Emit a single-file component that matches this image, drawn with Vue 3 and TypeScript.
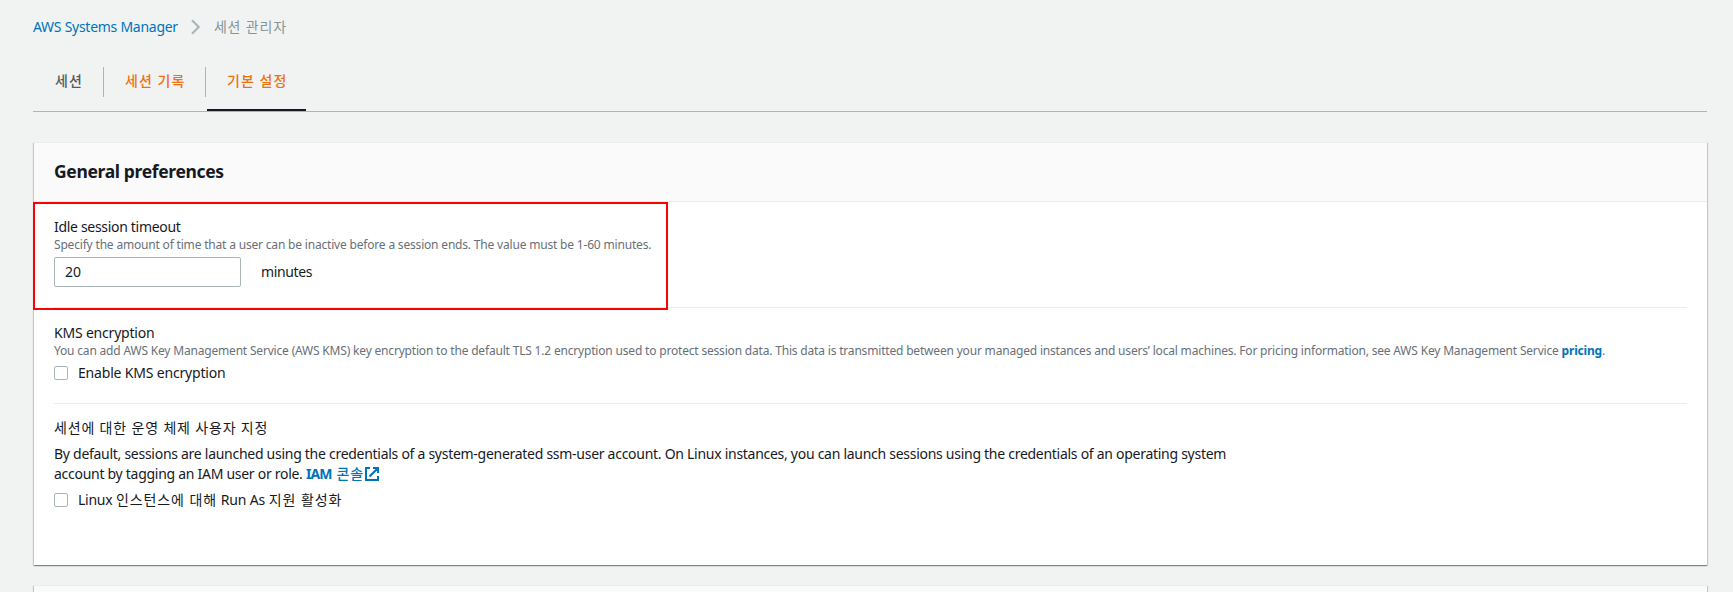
<script setup lang="ts">
import { ref } from 'vue'

interface Tab {
  label: string
  state: 'plain' | 'accent' | 'active'
}

const tabs: Tab[] = [
  { label: '세션', state: 'plain' },
  { label: '세션 기록', state: 'accent' },
  { label: '기본 설정', state: 'active' },
]

const timeout = ref('20')
const kmsEnabled = ref(false)
const runAsEnabled = ref(false)
</script>

<template>
  <div class="page">
    <nav class="breadcrumb">
      <a class="crumb-link">AWS Systems Manager</a>
      <svg class="chevron" width="10" height="16" viewBox="0 0 10 16">
        <path d="M1 1.2 7.7 8 1 14.8" fill="none" stroke="#aab7b8" stroke-width="2.2" />
      </svg>
      <span class="crumb-current ko">세션 관리자</span>
    </nav>

    <div class="tabs">
      <div v-for="tab in tabs" :key="tab.label" class="tab" :class="tab.state">
        <span class="tab-label ko">{{ tab.label }}</span>
      </div>
    </div>

    <section class="card">
      <header class="card-header">
        <h2>General preferences</h2>
      </header>
      <div class="card-body">
        <div class="group timeout">
          <div class="label idle">Idle session timeout</div>
          <div class="help">Specify the amount of time that a user can be inactive before a session ends. The value must be 1-60 minutes.</div>
          <div class="field">
            <input v-model="timeout" class="input" type="text" />
            <span class="unit">minutes</span>
          </div>
        </div>

        <div class="group kms">
          <div class="label kms-label">KMS encryption</div>
          <div class="help">You can add AWS Key Management Service (AWS KMS) key encryption to the default TLS 1.2 encryption used to protect session data. This data is transmitted between your managed instances and users’ local machines. For pricing information, see AWS Key Management Service <a class="link">pricing</a>.</div>
          <label class="check">
            <input v-model="kmsEnabled" type="checkbox" />
            <span>Enable KMS encryption</span>
          </label>
        </div>

        <div class="group runas">
          <div class="label ko">세션에 대한 운영 체제 사용자 지정</div>
          <p class="text">
            By default, sessions are launched using the credentials of a system-generated ssm-user account. On Linux instances, you can launch sessions using the credentials of an operating system<br />
            <span class="second">account by tagging an IAM user or role. </span><a class="link console"><span class="iam">IAM</span> <span class="ko">콘솔</span><svg class="external" width="14" height="14" viewBox="0 0 14 14">
              <path d="M5 1H1v12h12V9M8 1h5v5M13 1 4.5 9.5" fill="none" stroke="#0073bb" stroke-width="2" />
            </svg></a>
          </p>
          <label class="check mixed">
            <input v-model="runAsEnabled" type="checkbox" />
            <span>Linux <span class="ko">인스턴스에 대해</span> Run As <span class="ko">지원 활성화</span></span>
          </label>
        </div>
      </div>
      <div class="highlight"></div>
    </section>

    <section class="card next">
      <header class="card-header"></header>
    </section>
  </div>
</template>

<style>
body {
  background: #f1f3f3;
  overflow: hidden;
}
</style>

<style scoped>
.page {
  box-sizing: border-box;
  height: 592px;
  padding: 17px 26px 0 33px;
  overflow: hidden;
  background: #f1f3f3;
  color: #16191f;
  font-family: "Noto Sans", "Noto Sans CJK KR", sans-serif;
  font-size: 14px;
  line-height: 20px;
  letter-spacing: -0.27px;
  white-space: nowrap;
}

.ko {
  letter-spacing: 0.85px;
}

.breadcrumb {
  display: flex;
  align-items: center;
  height: 20px;
}

.crumb-link {
  color: #0073bb;
}

.chevron {
  margin: 0 13px 0 13px;
}

.crumb-current {
  color: #879596;
}

.tabs {
  display: flex;
  height: 74px;
  border-bottom: 1px solid #aab7b8;
}

.tab {
  position: relative;
  box-sizing: border-box;
  height: 74px;
  padding: 34px 0 0 22px;
  color: #545b64;
  font-weight: 500;
}

.tab .ko {
  letter-spacing: 1.05px;
}

.tab.plain {
  width: 70px;
}

.tab.accent {
  width: 102px;
}

.tab.active {
  width: 101px;
}

.tab + .tab::before {
  content: "";
  position: absolute;
  left: 0;
  top: 30px;
  width: 1px;
  height: 30px;
  background: #aab7b8;
}

.tab.accent,
.tab.active {
  color: #ec7211;
}

.tab.active::after {
  content: "";
  position: absolute;
  left: 2px;
  right: 0;
  bottom: 0;
  height: 2px;
  background: #16191f;
}

.card {
  position: relative;
  box-sizing: border-box;
  height: 423px;
  margin: 30px 0 0 1px;
  background: #fff;
  box-shadow: 0 1px 1px 0 rgba(0, 28, 36, 0.3), 1px 1px 1px 0 rgba(0, 28, 36, 0.15), -1px 1px 1px 0 rgba(0, 28, 36, 0.15);
  border-top: 1px solid #eaeded;
}

.card.next {
  margin-top: 20px;
}

.card-header {
  box-sizing: border-box;
  height: 59px;
  padding: 16px 20px 0;
  background: #fafafa;
  border-bottom: 1px solid #eaeded;
}

h2 {
  margin: 0;
  font-size: 17.5px;
  font-weight: 700;
  line-height: 24px;
  letter-spacing: -0.35px;
}

.card-body {
  padding: 15px 20px 0;
}

.group {
  box-sizing: border-box;
}

.timeout {
  height: 91px;
  border-bottom: 1px solid #eaeded;
}

.kms {
  height: 96px;
  padding-top: 15px;
  border-bottom: 1px solid #eaeded;
}

.runas {
  padding-top: 14px;
}

.label {
  height: 20px;
}

.label.ko {
  letter-spacing: 0.83px;
}

.idle {
  letter-spacing: -0.31px;
}

.kms-label {
  letter-spacing: -0.2px;
}

.help {
  height: 16px;
  color: #687078;
  font-size: 12px;
  line-height: 16px;
  letter-spacing: -0.184px;
}

.link {
  color: #0073bb;
  font-weight: 700;
}

.field {
  display: flex;
  align-items: center;
  gap: 20px;
  margin-top: 4px;
}

.input {
  box-sizing: border-box;
  width: 187px;
  height: 30px;
  padding: 0 10px 1px;
  border: 1px solid #aab7b8;
  border-radius: 2px;
  background: #fff;
  color: #16191f;
  font: inherit;
  letter-spacing: 0;
  outline: none;
}

.unit {
  letter-spacing: -0.35px;
}

.check {
  display: flex;
  align-items: center;
  gap: 10px;
  height: 20px;
}

.kms .check {
  margin-top: 4px;
  letter-spacing: -0.18px;
}

.mixed {
  word-spacing: 0.4px;
}

.check input {
  appearance: none;
  box-sizing: border-box;
  width: 14px;
  height: 14px;
  margin: 0;
  border: 1px solid #aab7b8;
  border-radius: 2px;
  background: #fff;
}

.text {
  height: 40px;
  margin: 6px 0;
  letter-spacing: -0.277px;
}

.second {
  letter-spacing: -0.28px;
}

.iam {
  margin-right: 1.5px;
  letter-spacing: -0.9px;
}

.console .ko {
  font-weight: 500;
}

.external {
  margin-left: 1px;
  vertical-align: -2px;
}

.highlight {
  position: absolute;
  left: -1px;
  top: 59px;
  width: 635px;
  height: 108px;
  box-sizing: border-box;
  border: 2px solid #f00;
}
</style>
